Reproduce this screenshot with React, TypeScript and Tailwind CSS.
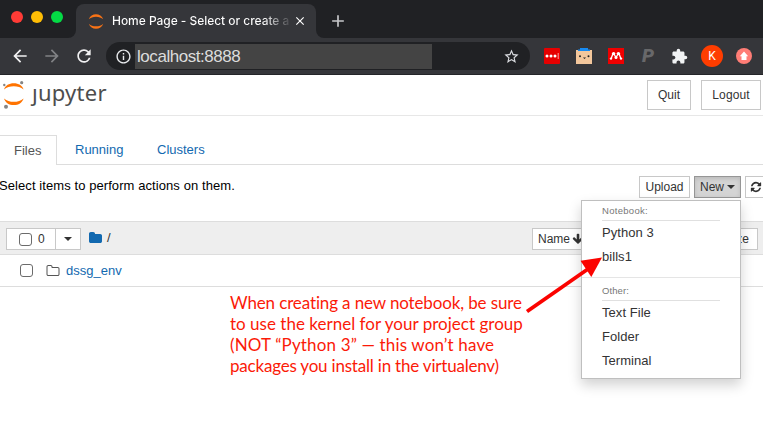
import type { ReactNode } from "react";
import { MdArrowBack, MdArrowForward, MdRefresh, MdInfoOutline, MdStarBorder, MdExtension, MdClose, MdAdd } from "react-icons/md";

const FOLDER =
  "M1664 608v704q0 92-66 158t-158 66h-1216q-92 0-158-66t-66-158v-960q0-92 66-158t158-66h320q92 0 158 66t66 158v32h672q92 0 158 66t66 158z";
const FOLDER_OPEN =
  "M1600 1312v-704q0-40-28-68t-68-28h-704q-40 0-68-28t-28-68v-64q0-40-28-68t-68-28h-320q-40 0-68 28t-28 68v960q0 40 28 68t68 28h1216q40 0 68-28t28-68zm128-704v704q0 92-66 158t-158 66h-1216q-92 0-158-66t-66-158v-960q0-92 66-158t158-66h320q92 0 158 66t66 158v32h672q92 0 158 66t66 158z";
const REFRESH =
  "M1639 1056q0 5-1 7-64 268-268 434.5t-478 166.5q-146 0-282.5-55t-243.5-157l-129 129q-19 19-45 19t-45-19-19-45v-448q0-26 19-45t45-19h448q26 0 45 19t19 45-19 45l-137 137q71 66 161 102t187 36q134 0 250-65t186-179q11-17 53-117 8-23 30-23h192q13 0 22.5 9.5t9.5 22.5zm25-800v448q0 26-19 45t-45 19h-448q-26 0-45-19t-19-45 19-45l138-138q-148-137-349-137-134 0-250 65t-186 179q-11 17-53 117-8 23-30 23h-199q-13 0-22.5-9.5t-9.5-22.5v-7q65-268 270-434.5t480-166.5q146 0 284 55.5t245 156.5l130-129q19-19 45-19t45 19 19 45z";
const ARROW_DOWN =
  "M1675 832q0 53-37 90l-651 652q-39 37-91 37-53 0-90-37l-651-652q-38-36-38-90 0-53 38-91l74-75q39-37 91-37 53 0 90 37l294 294v-704q0-52 38-90t90-38h128q52 0 90 38t38 90v704l294-294q37-37 90-37 52 0 91 37l75 75q37 39 37 91z";

function Glyph({ d, className }: { d: string; className: string }) {
  return (
    <svg viewBox="0 0 1792 1792" className={`shrink-0 ${className}`} fill="currentColor">
      <path d={d} />
    </svg>
  );
}

function Caret() {
  return (
    <svg viewBox="0 0 8 4" className="h-1 w-2 shrink-0" fill="currentColor">
      <path d="M0 0h8L4 4z" />
    </svg>
  );
}

function Arcs({ className }: { className: string }) {
  return (
    <svg viewBox="0 0 20 20" className={`shrink-0 ${className}`} fill="#f97316">
      <path d="M1 7.3C2.5 3.2 6 1 10 1s7.500 2.200 9 6.300C16.700 5 13.700 4 10 4S3.300 5 1 7.300z" />
      <path d="M1 12.700C2.500 16.800 6 19 10 19s7.500-2.200 9-6.300C16.700 15 13.700 16 10 16s-6.700-1-9-3.300z" />
    </svg>
  );
}

function Button({ className, children }: { className: string; children?: ReactNode }) {
  return (
    <button className={`flex shrink-0 items-center border border-[#c8c8c8] bg-white whitespace-nowrap text-[#333] ${className}`}>
      {children}
    </button>
  );
}

function Box() {
  return <span className="block h-[13px] w-[13px] shrink-0 rounded-[3px] border border-[#6b6b6b] bg-white" />;
}

function TabStrip() {
  return (
    <div className="bg-[#35363a]">
      <div className="flex h-[38px] bg-[linear-gradient(#202124_50%,#35363a_50%)]">
        <div className="flex w-[76px] gap-2 rounded-br-[8px] bg-[#202124] pt-[11px] pl-[11px]">
          <span className="h-3 w-3 rounded-full bg-[#ff3b36]" />
          <span className="h-3 w-3 rounded-full bg-[#ffbd05]" />
          <span className="h-3 w-3 rounded-full bg-[#04da45]" />
        </div>
        <div className="mt-1 flex h-[34px] w-[240px] items-center rounded-t-[8px] bg-[#35363a] pl-3">
          <Arcs className="h-[17px] w-4" />
          <div className="ml-2 w-[178px] bg-gradient-to-r from-white from-85% to-[#48494d] to-100% bg-clip-text font-['Inter',sans-serif] text-[12px] leading-4 font-medium tracking-[-0.04px] whitespace-nowrap text-transparent">
            Home Page - Select or create a
          </div>
          <MdClose className="ml-[3px] h-[14px] w-[14px] text-white" />
        </div>
        <div className="flex-1 rounded-bl-[8px] bg-[#202124] pt-[11px] pl-[12px]">
          <MdAdd className="h-5 w-5 text-[#c6c7ca]" />
        </div>
      </div>
    </div>
  );
}

function Toolbar() {
  return (
    <div className="flex h-[37px] items-center border-b border-[#242529] bg-[#35363a]">
      <MdArrowBack className="ml-[10px] h-5 w-5 shrink-0 text-[#f1f1f2]" />
      <MdArrowForward className="ml-3 h-5 w-5 shrink-0 text-[#818285]" />
      <MdRefresh className="ml-3 h-5 w-5 shrink-0 text-[#f1f1f2]" />
      <div className="ml-[12px] flex h-7 w-[424px] shrink-0 items-center rounded-full bg-[#202124]">
        <MdInfoOutline className="ml-[9px] h-[17px] w-[17px] shrink-0 text-[#e8eaed]" />
        <div className="ml-[3px] flex h-[25px] w-[297px] items-center bg-[#444] pt-px pl-[2px] font-['Liberation_Sans',sans-serif] text-[17px] tracking-[-0.45px] text-[#dcdcdc]">
          localhost:8888
        </div>
        <MdStarBorder className="ml-[71px] h-[17px] w-[17px] shrink-0 text-[#dadce0]" />
      </div>
      <svg viewBox="0 0 16 16" className="ml-[14px] h-4 w-4 shrink-0">
        <rect width="16" height="16" rx="1" fill="#e60000" />
        <circle cx="3" cy="8" r="1.500" fill="#fff" />
        <circle cx="7" cy="8" r="1.500" fill="#fff" />
        <circle cx="11" cy="8" r="1.500" fill="#fff" />
        <path d="M14.200 5v6" stroke="#ff9b9b" />
      </svg>
      <svg viewBox="0 0 16 16" className="ml-4 h-4 w-4 shrink-0">
        <path d="M0 2h16v14H0z" fill="#f3c79c" />
        <path d="M4 0h8v1.500h2V3H2V1.500h2z" fill="#178bf2" />
        <circle cx="4" cy="8.300" r="1" fill="#222" />
        <circle cx="12.500" cy="8.300" r="1" fill="#222" />
        <path d="M7 9.500h3L8.500 11z" fill="#222" />
      </svg>
      <svg viewBox="0 0 16 16" className="ml-4 h-4 w-4 shrink-0">
        <path d="M0 0h16v16H0z" fill="#f00000" />
        <g fill="#fff">
          <circle cx="5.600" cy="5.600" r="1.700" />
          <circle cx="10.400" cy="5.600" r="1.700" />
          <circle cx="3" cy="10.600" r="1.200" />
          <circle cx="8" cy="9.500" r="1.500" />
          <circle cx="13" cy="10.600" r="1.200" />
        </g>
        <path d="M5 5.500l-1.800 5M6 6l2 3.500M10 6L8 9.500M11 5.500l1.800 5" stroke="#fff" strokeWidth="1.300" />
      </svg>
      <span className="ml-4 w-4 text-center font-['Roboto',sans-serif] text-[19px] leading-5 font-black text-[#68686a] italic">P</span>
      <MdExtension className="ml-[15px] h-[17px] w-[17px] shrink-0 text-[#f1f3f4]" />
      <span className="ml-[13px] flex h-[22px] w-[22px] shrink-0 items-center justify-center rounded-full bg-[#ff3d00] font-['Roboto',sans-serif] text-[12px] text-white">K</span>
      <svg viewBox="0 0 16 16" className="ml-[13px] h-4 w-4 shrink-0">
        <circle cx="8" cy="8" r="8" fill="#ff7d76" />
        <path d="M8 3.500l4.200 4.700h-1.700V12h-5V8.200H3.800z" fill="#fff" />
      </svg>
    </div>
  );
}

function Header() {
  return (
    <div className="flex h-[41px] border-b border-[#e7e7e7]">
      <svg viewBox="0 0 24 30" className="ml-[2px] mt-[5px] h-[30px] w-6 shrink-0">
        <g fill="#ff7300">
          <path d="M2 9.400C3.400 5.400 7 3.200 11.800 3.200s8.400 2.200 9.800 6.200C18.900 7.100 15.600 6.200 11.800 6.200S4.700 7.100 2 9.400z" />
          <path d="M2 18.400C3.400 22.600 7 25.100 11.800 25.100s8.400-2.500 9.800-6.700c-2.700 2.500-6 3.300-9.800 3.300S4.700 20.900 2 18.400z" />
        </g>
        <g fill="#858585">
          <circle cx="2.300" cy="5" r="1.200" />
          <circle cx="19.700" cy="2.700" r="1.600" />
          <circle cx="4" cy="26.700" r="2" />
        </g>
      </svg>
      <div className="ml-[6px] w-[80px] font-['Noto_Sans',sans-serif] text-[22px] leading-[34px] tracking-[0.25px] text-[#4d4d4d]">ȷupyter</div>
      <div className="mt-[5px] mr-[2px] ml-auto flex gap-[10px] text-[12px]">
        <Button className="h-[30px] w-11 justify-center">Quit</Button>
        <Button className="h-[30px] w-[60px] justify-center tracking-[0.1px]">Logout</Button>
      </div>
    </div>
  );
}

function NewMenu() {
  return (
    <div className="absolute top-[24px] right-0 h-[179px] w-[160px] border border-[#bfbfbf] bg-white pt-[5px] text-[13px] leading-6 tracking-[0.05px] text-[#333] shadow-[0_6px_12px_rgba(0,0,0,0.18)]">
      <div className="mx-5 h-[15px] border-b border-[#e0e0e0] text-[9.5px] leading-[10px] tracking-[0.3px] text-[#777]">Notebook:</div>
      <div className="px-5">Python 3</div>
      <div className="px-5">bills1</div>
      <div className="mt-[8px] border-t border-[#e5e5e5] pt-[8px]">
        <div className="mx-5 h-[15px] border-b border-[#e0e0e0] text-[9.5px] leading-[10px] tracking-[0.1px] text-[#777]">Other:</div>
        <div className="px-5">Text File</div>
        <div className="px-5">Folder</div>
        <div className="px-5">Terminal</div>
      </div>
    </div>
  );
}

function Note() {
  return (
    <>
      <div className="absolute top-[292px] left-[230px] font-['Lato',sans-serif] text-[17px] leading-[21px] whitespace-nowrap text-[#fb1a08]">
        <div className="tracking-[-0.13px]">When creating a new notebook, be sure</div>
        <div className="tracking-[0.02px]">to use the kernel for your project group</div>
        <div className="tracking-[0.15px]">(NOT “Python 3” — this won’t have</div>
        <div className="tracking-[-0.2px]">packages you install in the virtualenv)</div>
      </div>
      <svg viewBox="0 0 80 60" className="absolute top-[254px] left-[524px] z-20 h-[60px] w-20">
        <path d="M3 57.500L64 15" stroke="#fb0300" strokeWidth="3.800" />
        <path d="M78 3.500L56.500 6.800 67.300 23z" fill="#fb0300" />
      </svg>
    </>
  );
}

export default function App() {
  return (
    <div className="relative h-[434px] w-[763px] overflow-hidden bg-white font-['Liberation_Sans',Arial,sans-serif] text-[13px] text-black">
      <TabStrip />
      <Toolbar />
      <Header />
      <div className="mt-[19px] flex h-[30px] border-b border-[#ddd] leading-[30px] text-[#1269b0]">
        <div className="h-[30px] w-[57px] border-t border-r border-[#ddd] bg-white pl-[14px] text-[#555]">Files</div>
        <div className="ml-[18px] w-[82px]">Running</div>
        <div>Clusters</div>
      </div>
      <div className="flex h-[56px] pt-[11px]">
        <div className="-ml-px leading-[20px] tracking-[0.08px]">Select items to perform actions on them.</div>
        <div className="ml-auto flex h-[22px] gap-1 text-[12px]">
          <Button className="w-[51px] justify-center">Upload</Button>
          <div className="relative z-10 flex">
            <button className="flex h-[22px] w-[47px] items-center justify-center gap-[3px] border border-[#969696] bg-[#d4d4d4] text-[#333] shadow-[inset_0_2px_4px_rgba(0,0,0,0.12)]">
              New
              <Caret />
            </button>
            <NewMenu />
          </div>
          <Button className="-mr-[5px] w-[23px] pl-1"><Glyph d={REFRESH} className="h-3 w-3" /></Button>
        </div>
      </div>
      <div className="flex h-[34px] items-center border-y border-[#ddd] bg-[#eee] pl-[6px] text-[12px]">
        <div className="mt-[2px] flex h-[22px]">
          <Button className="w-[50px] gap-[6px] pl-3"><Box />0</Button>
          <Button className="-ml-px w-[26px] justify-center"><Caret /></Button>
        </div>
        <Glyph d={FOLDER} className="ml-[8px] h-[14px] w-[14px] text-[#1269b0]" />
        <span className="ml-[4px] text-[13px] text-[#333]">/</span>
        <div className="mt-[2px] mr-[5px] ml-auto flex h-[22px]">
          <Button className="w-[54px] gap-[2px] pl-[5px]">Name<Glyph d={ARROW_DOWN} className="h-3 w-3" /></Button>
          <Button className="w-[103px]" />
          <Button className="w-[69px] justify-end pr-[8px]">File size</Button>
        </div>
      </div>
      <div className="flex h-[32px] items-center border-b border-[#ddd] pl-5">
        <Box />
        <Glyph d={FOLDER_OPEN} className="ml-[13px] h-[14px] w-[14px] text-[#555]" />
        <span className="ml-[6px] text-[#1269b0]">dssg_env</span>
      </div>
      <Note />
    </div>
  );
}
